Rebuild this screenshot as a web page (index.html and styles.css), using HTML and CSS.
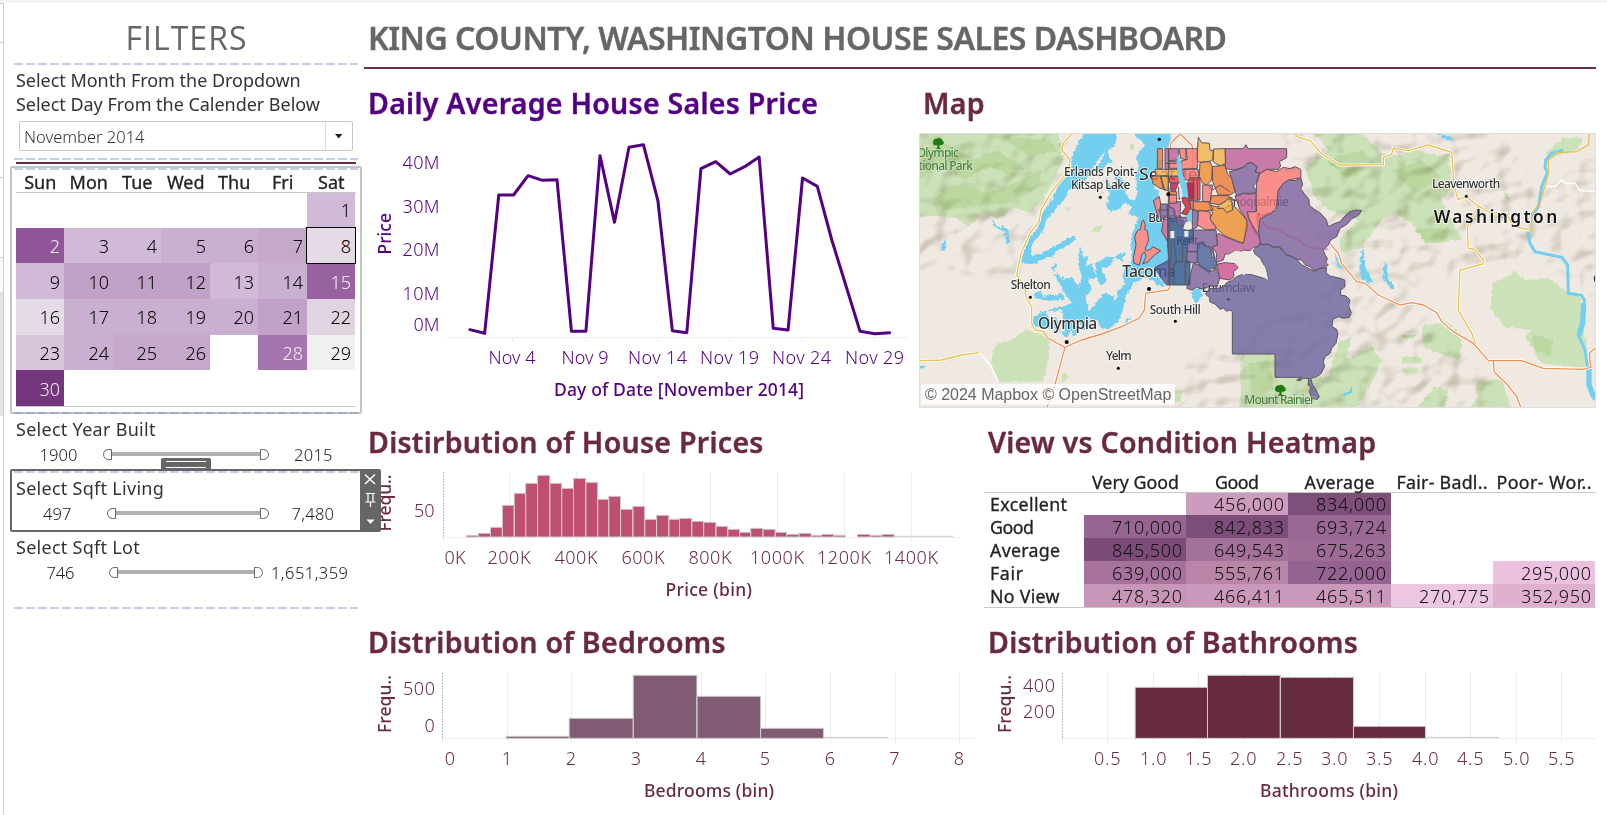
FILE: index.html
```html
<!DOCTYPE html>
<html lang="en">
<head>
<meta charset="utf-8">
<title>King County House Sales</title>
<link rel="stylesheet" href="styles.css">
</head>
<body>
<div class="page">
  <div class="gutter"><i class="g1"></i><i class="g2"></i><i class="g3"></i><i class="g4"></i><i class="g5"></i></div>

  <aside class="sidebar">
    <h2 class="filters">FILTERS</h2>
    <div class="dash"></div>
    <div class="hint"><p class="h-a">Select Month From the Dropdown</p><p class="h-b">Select Day From the Calender Below</p></div>
    <div class="select"><span>November 2014</span><b><svg width="8" height="5" viewBox="0 0 8 5"><path d="M0 0H7.4L3.7 4.4Z" fill="#222"/></svg></b></div>
    <div class="dash"></div>
    <div class="rule"></div>
    <section class="calendar">
      <div class="dash"></div>
      <div class="days"><span>Sun</span><span>Mon</span><span>Tue</span><span>Wed</span><span>Thu</span><span>Fri</span><span>Sat</span></div>
      <div class="cells">
        <i></i><i></i><i></i><i></i><i></i><i></i><span class="c3">1</span>
        <span class="c9 lt">2</span><span class="c3">3</span><span class="c3">4</span><span class="c4">5</span><span class="c4">6</span><span class="c5">7</span><span class="c1 sel">8</span>
        <span class="c3">9</span><span class="c6">10</span><span class="c6">11</span><span class="c6">12</span><span class="c3">13</span><span class="c4">14</span><span class="c8 lt">15</span>
        <span class="c1">16</span><span class="c4">17</span><span class="c4">18</span><span class="c4">19</span><span class="c4">20</span><span class="c6">21</span><span class="c1b">22</span>
        <span class="c2">23</span><span class="c4">24</span><span class="c5">25</span><span class="c5">26</span><i></i><span class="c7 lt">28</span><span class="c0">29</span>
        <span class="c10 lt">30</span><i></i><i></i><i></i><i></i><i></i><i></i>
      </div>
      <div class="dash low"></div>
    </section>
    <section class="range year">
      <h3 class="t-year">Select Year Built</h3>
      <svg width="345" height="24" viewBox="14 443 345 24"><text class="val" x="39.5" y="461" textLength="38">1900</text><text class="val" x="294" y="461" textLength="38.5">2015</text><path class="track" d="M112 454H260"/><path class="knob" d="M111.500 449.500V459.500H108.500A5 5 0 0 1 108.500 449.500ZM260.500 449.500V459.500H263.500A5 5 0 0 0 263.500 449.500Z"/></svg>
    </section>
    <section class="range living">
      <div class="dash"></div>
      <h3 class="t-liv">Select Sqft Living</h3>
      <svg width="345" height="24" viewBox="14 501 345 24"><text class="val" x="43" y="520.600" textLength="28.500">497</text><text class="val" x="291.500" y="520.600" textLength="42.500">7,480</text><path class="track" d="M116 514H260"/><path class="knob" d="M115.500 509.500V519.500H112.500A5 5 0 0 1 112.500 509.500ZM260.500 509.500V519.500H263.500A5 5 0 0 0 263.500 509.500Z"/></svg>
      <div class="grip"></div>
      <div class="tools"><svg width="21" height="63" viewBox="0 0 21 63"><g fill="none" stroke="#fff" stroke-width="1.500"><path d="M5 5.500L15 15M15 5.500L5 15"/><path stroke-width="1.200" d="M6 24.500H15M8 24.500V33M13 24.500V33M5.500 33H15.500M10.500 33V38"/></g><path d="M6.500 50.500H14.500L10.500 55Z" fill="#fff"/></svg></div>
    </section>
    <section class="range lot">
      <h3 class="t-lot">Select Sqft Lot</h3>
      <svg width="345" height="24" viewBox="14 561 345 24"><text class="val" x="46.500" y="579" textLength="28">746</text><text class="val" x="271" y="579" textLength="77">1,651,359</text><path class="track" d="M118 572H254"/><path class="knob" d="M117.500 567.500V577.500H114.500A5 5 0 0 1 114.500 567.500ZM254.500 567.500V577.500H257.500A5 5 0 0 0 257.500 567.500Z"/></svg>
      <div class="dash"></div>
    </section>
  </aside>

  <main class="main">
    <header class="banner"><h1>KING COUNTY, WASHINGTON HOUSE SALES DASHBOARD</h1></header>

    <div class="row row-a">
      <section class="panel p-line">
        <h2 class="title indigo w-daily">Daily Average House Sales Price</h2>
        <svg class="chart line" width="555" height="290" viewBox="364 130 555 290">
          <path class="grid" d="M447 337.500H908M512.500 337V342M585.500 337V342M657.500 337V342M729.500 337V342M801.500 337V342M874.500 337V342"/>
          <g class="num" text-anchor="end"><text x="439.500" y="169" textLength="37">40M</text><text x="439.500" y="213" textLength="37">30M</text><text x="439.500" y="256.300" textLength="37">20M</text><text x="439.500" y="300" textLength="37">10M</text><text x="439.500" y="331" textLength="26">0M</text></g>
          <text class="lab" transform="translate(390.500 254.500) rotate(-90)" textLength="41.500">Price</text>
          <polyline class="series" transform="translate(360 0) scale(.34438 .33333)" points="319,989 362,1000 403,585 446,585 488,527 530,541 572,539 614,994 656,994 697,467 739,667 781,442 823,434 865,602 907,992 949,998 990,506 1033,485 1075,522 1117,500 1159,471 1200,985 1243,990 1285,534 1328,559 1370,720 1452,994 1495,1001 1538,998"/>
          <g class="num"><text x="488.500" y="363.500" textLength="47">Nov 4</text><text x="561.500" y="363.500" textLength="47">Nov 9</text><text x="628" y="363.500" textLength="59">Nov 14</text><text x="700" y="363.500" textLength="59">Nov 19</text><text x="772" y="363.500" textLength="59">Nov 24</text><text x="845" y="363.500" textLength="59">Nov 29</text></g>
          <text class="lab" x="554" y="395.500" textLength="250">Day of Date [November 2014]</text>
        </svg>
      </section>
      <section class="panel p-map">
        <h2 class="title w-map">Map</h2>
        <svg class="map" width="677" height="275" viewBox="12 9 2031 825">
          <defs>
            <filter id="relief" x="0" y="0" width="100%" height="100%" color-interpolation-filters="sRGB">
              <feTurbulence type="fractalNoise" baseFrequency=".013 .016" numOctaves="2" seed="7" result="n"/>
              <feDiffuseLighting in="n" surfaceScale="16" diffuseConstant="1.2" lighting-color="#fff"><feDistantLight azimuth="225" elevation="56"/></feDiffuseLighting>
              <feColorMatrix values=".36 0 0 0 .64  0 .39 0 0 .61  0 0 .5 0 .5  0 0 0 1 0"/>
            </filter>
            <filter id="jag" x="0" y="0" width="100%" height="100%"><feTurbulence type="fractalNoise" baseFrequency=".1" numOctaves="2" seed="3"/><feDisplacementMap in="SourceGraphic" scale="14" xChannelSelector="R" yChannelSelector="G"/></filter>
            <filter id="soft" x="-10%" y="-10%" width="120%" height="120%"><feGaussianBlur stdDeviation="8"/></filter>
            <mask id="hills"><g fill="#fff" filter="url(#soft)"><path d="M0 0H460L440 130 350 300 310 430 180 440 60 400 0 420ZM820 700L1260 480 1100 0H1700L1800 60 1860 200 1880 380 1700 400 1480 480 1560 620 1700 720 1780 834H700Z"/><path d="M1880 200L2040 60V500L1900 400Z"/></g></mask>
          </defs>
          <rect class="land" x="0" y="0" width="2060" height="840"/>
          <!-- forests -->
          <g filter="url(#jag)">
          <g class="wood">
            <path d="M0 0H430L445 90 400 180 350 250 300 235 250 265 205 250 160 290 120 262 60 258 0 262Z"/>
            <path d="M250 640L300 625 330 598 375 612 405 630 400 690 385 755 250 755 228 700 235 660Z"/>
            <path d="M978 672L1085 672 1085 745 1240 740 1270 640 1310 620 1290 690 1370 650 1400 690 1370 760 1320 840H975Z"/>
            <path d="M1170 115L1240 60 1190 0H1330L1400 70 1460 75 1500 60 1560 75 1600 75 1610 170 1580 210 1610 270 1640 330 1530 340 1490 280 1440 250 1400 270 1340 350 1280 370 1270 330 1330 270 1240 240 1200 200Z"/>
            <path d="M1735 460L1800 425 1830 450 1900 445 1960 490 2000 500 2000 590 2015 640 2015 715 1880 700 1830 620 1850 600 1770 590 1725 535Z"/>
            <path d="M1520 585L1600 580 1640 615 1635 690 1570 670 1525 650ZM1890 70L1945 25 2008 25 1985 60 1900 85ZM1680 760L1760 745 1790 840H1660L1690 800ZM1560 770L1600 780 1590 840H1500Z"/>
            <path d="M645 45h12v14h-14zM535 295l30-12-8 18-28 6zM450 230l14 4-6 12zM438 742l12-18 10 20-20 16zM780 785l24-4-6 30-20 10zM555 185l12-2-4 14zM1460 615h40v12h-40zM1460 680h60v20h-60zM1465 715h45v18h-45zM1770 190l10 0 4 20-14-4z"/>
          </g>
          <g class="wood2"><path d="M12 60L90 40 180 90 240 60 330 110 300 140 220 110 150 150 70 110 12 150ZM60 200L140 160 220 190 320 150 380 120 370 170 280 220 170 230 90 240ZM260 20L400 30 430 60 340 80ZM1430 120L1520 90 1580 140 1500 190ZM1500 300L1600 290 1590 330 1530 335ZM1230 90L1340 60 1380 100 1300 150ZM1000 700L1060 690 1080 780 1010 800ZM1850 610L1915 630 1905 680 1860 660Z"/></g>
          </g>
          <g class="shade" mask="url(#hills)"><rect x="0" y="0" width="2060" height="840" filter="url(#relief)"/></g>
          <!-- water -->
          <g class="water" filter="url(#jag)">
            <path d="M512 0L490 40 470 80 468 125 430 160 410 210 380 250 370 290 345 320 330 350 318 398 352 406 400 380 412 385 425 362 450 350 485 324 480 318 440 335 410 355 380 372 345 375 352 340 382 305 398 265 430 225 450 205 462 180 500 165 515 145 530 120 560 75 600 45 610 0Z"/>
            <path d="M600 0L575 60 592 100 580 95 560 125 545 110 565 80 590 30ZM645 0L690 45 665 80 672 110 660 140 668 190 655 215 630 190 635 160 600 130 606 165 590 170 575 140 570 150 582 190 575 235 590 245 570 255 605 240 630 220 650 228 640 250 668 262 660 290 648 330 650 395 630 410 622 440 632 462 605 485 610 505 580 520 560 500 565 540 545 560 555 590 580 598 605 580 620 555 632 500 655 460 690 440 720 460 740 470 755 468 730 440 722 425 745 408 762 400V340L745 310 742 270 728 235 733 190 712 160 720 125 740 100 728 60 762 52 770 0Z"/>
            <path d="M495 350L505 380 520 378 512 410 530 400 545 440 520 450 530 480 512 500 520 540 545 525 565 540 540 575 520 560 500 590 480 560 470 520 450 490 440 470 420 440 425 430 450 450 470 440 490 470 500 440 490 400ZM540 400L580 380 600 385 580 410 560 420 575 450 560 470 545 440ZM600 380L632 365 620 395ZM355 495L375 480 385 500 440 490 450 510 400 512 365 505ZM355 560L400 540 425 535 470 520 500 560 470 600 455 625 430 600 400 570 420 600 380 590 350 590ZM480 580L490 610 470 622ZM540 520L570 490 600 500 580 540 550 560ZM500 600L520 565 525 590ZM395 545L410 590 422 560 440 610 450 600 440 540Z"/>
            <path d="M228 270L250 290 278 292 285 338 275 338 268 305 240 292ZM95 325L90 360 75 368 82 340ZM410 418l12-22 4 8-8 18zM830 480L855 475 862 500 845 520 830 500ZM628 575L645 560 640 580ZM12 708h22l-18 10z"/>
            <path d="M1562 12L1595 15 1620 32 1600 32ZM1343 352L1350 400 1372 455 1360 462 1338 440 1335 395ZM1408 400L1417 402 1418 445 1438 468 1432 478 1405 445ZM1275 795L1300 785 1312 770 1310 790 1290 798ZM1260 370L1272 400 1290 415 1275 418 1262 395ZM1105 118L1140 110 1150 116 1110 124Z"/>
          </g>
          <path class="river" d="M1945 60L1910 70 1892 90 1890 115 1898 125 1880 170 1870 230 1850 260M1838 305L1845 340 1860 365 1940 382 1958 405 1960 490 2000 496 2008 510 2002 580 1990 615 2010 660 2018 710 2022 760 2038 810"/>
          <path class="river thick" d="M2006 520L2003 580 1992 615M2022 715V765L2036 800"/>
          <!-- roads -->
          <path class="road-case" d="M470 12L445 40 440 60 465 90 460 125 410 185 378 240 372 275 345 310 318 370 305 435 330 470 332 500 350 530 350 580 360 600 385 605M12 692L80 690 140 675 192 668"/>
          <path class="road yellow" d="M470 12L445 40 440 60 465 90 460 125 410 185 378 240 372 275 345 310 318 370 305 435 330 470 332 500 350 530 350 580 360 600 385 605 400 625M12 692L80 690 140 675 192 668"/>
          <path class="road-white" d="M192 668L225 705 250 755"/>
          <g transform="translate(1005)">
            <path class="road-case" d="M135 12L145 22 180 32 215 72 270 105 400 104 400 82 425 72 430 55 475 62 535 45 605 67 612 170 625 208 650 200 680 225 720 248 770 250 790 290 840 300M685 230L670 255 652 290 655 355 675 358 700 390 698 402 630 420 625 540 665 610 680 650"/>
            <path class="road yellow" d="M135 12L145 22 180 32 215 72 270 105 400 104 400 82 425 72 430 55 475 62 535 45 605 67 612 170 625 208 650 200 680 225 720 248 770 250 790 290 845 300V250L870 220 895 130V90L920 68 980 65 1015 45 1018 12M685 230L670 255 652 290 655 355 675 358 700 390 698 402 630 420 625 540 665 610 680 650"/>
            <path class="road-white" d="M890 170L915 170 935 150 945 160 975 160 990 182 1035 184"/>
            <path class="road-case" d="M240 340L265 370 275 400 320 455 345 460 385 495 450 525 485 518 520 525 560 548 575 575 610 605 670 640 715 692 815 692 880 715 1000 718 1022 712 1018 670 1035 655M730 692L732 725 770 762 800 800 812 831"/>
            <path class="road orange" d="M240 340L265 370 275 400 320 455 345 460 385 495 450 525 485 518 520 525 560 548 575 575 610 605 670 640 715 692 815 692 880 715 1000 718 1022 712 1018 670 1035 655M730 692L732 725 770 762 800 800 812 831"/>
          </g>
          <path class="road-case" d="M765 60L768 38 796 12 832 48 832 240M762 200L768 350 765 470 760 480 692 490 688 540 672 565 620 590 560 612 500 630 450 652 400 625M450 652L410 800 396 831M762 205H830L832 300 810 300"/>
          <path class="road orange" d="M765 60L768 38 796 12 832 48 832 240M762 200L768 350 765 470 760 480 692 490 688 540 672 565 620 590 560 612 500 630 450 652 400 625M450 652L410 800 396 831M762 205H830L832 300 810 300"/>

          <!-- place names beneath the zip areas -->
          <g class="place">
            <text class="big sea" x="672" y="149" textLength="176" lengthAdjust="spacingAndGlyphs">Seattle</text>
            <text x="700" y="275" textLength="102">Burien</text><text x="783" y="345" textLength="68">Kent</text>
            <text class="big" x="622" y="440" textLength="160">Tacoma</text>
            <text x="860" y="485" textLength="161">Enumclaw</text><text x="935" y="227" textLength="187">Snoqualmie</text>
          </g>
          <circle cx="940" cy="508" r="4.500"/><circle cx="1030" cy="253" r="4.500"/>

          <!-- zip areas -->
          <g class="zip" transform="translate(585)">
            <path fill="#6a639f" d="M448 343L475 343 492 352 508 350 520 366 530 375 545 378 560 388 575 404 590 412 612 424 630 416 650 412 648 428 660 438 690 445 704 450 705 470 692 480 692 495 708 498 720 510 716 528 724 548 718 562 700 565 685 560 668 568 666 590 680 598 684 610 678 640 665 655 660 670 645 680 640 695 644 710 632 732 620 740 602 745 608 765 618 780 628 800 622 808 606 806 598 785 603 772 594 765 596 745 580 745 570 752 560 750 575 742H495V672H367V545L360 540 350 544 340 534 330 538 315 522 300 516 298 502 286 492 300 475 320 476 340 470 350 458 365 452 380 440 400 432 425 434 445 440 475 448 470 420 458 400 452 385 435 372 430 360Z"/>
            <path fill="#7d62a0" d="M448 310L440 260 475 250 500 240 502 210 505 180 520 160 535 150 555 152 573 145 578 165 572 175 585 195 597 208 598 225 615 240 632 250 648 268 655 290 675 280 690 275 705 258 720 245 740 240 755 242 745 256 725 266 712 282 690 295 680 320 662 330 655 345 640 360 645 375 652 385 648 398 655 405 630 415 612 422 600 410 585 404 575 390 560 388 545 380 530 375 520 360 508 350 492 352 475 343 448 343Z"/>
            <path fill="#fb7776" d="M450 130L470 118 500 125 520 112 540 116 555 110 572 118 573 143 535 150 520 160 505 180 502 205 500 230 485 250 470 255 450 268 445 310 440 315 430 300 425 285 415 260 412 245 440 245 438 200 440 160Z"/>
            <path fill="#bf5f9a" d="M345 56L400 56 408 44 414 56 530 56V83L508 95 512 108 505 118 470 118 450 130 435 125 442 110 425 98 412 100 405 110 370 120 345 115Z"/>
            <path fill="#7d62a0" d="M358 125L380 120 400 112 412 100 425 98 442 112 435 125 448 130 438 160 430 168 440 185 420 195 400 190 390 198 380 198 372 170Z"/>
            <path fill="#bf5f9a" d="M375 198L400 190 438 190 438 245H412L415 265 430 290 445 315 452 335 445 350 430 352 420 362 400 360 385 370 375 362 360 372 345 372 340 390 318 398 320 370 307 350 323 345 318 325 325 310 380 335 400 340 410 270 390 240Z"/>
            <path fill="#f2b24a" d="M265 22L275 38 298 40 300 60 310 62 308 90 295 95 270 97 260 90ZM310 57L345 56 347 100 330 108 310 95Z"/>
            <path fill="#ed8f30" d="M270 97L300 95 307 110 305 150 290 165 278 160 268 140ZM297 225L340 235 365 225 380 235 410 270 412 290 400 340 380 332 365 326 345 318 325 300 308 285 300 265 308 250Z"/>
            <path fill="#ed7a35" d="M307 110L345 105 352 130 365 145 375 185 360 195 325 195 308 155ZM305 197H355L372 210 350 210 335 225 300 220ZM250 215L295 215 310 240 265 245 247 235Z"/>
            <path fill="#f2b24a" d="M330 222L345 215 352 206 365 208 368 240 350 248 340 235 322 236Z"/>
            <path fill="#fb7776" d="M265 240L300 246 302 270 318 290 315 298 290 300 262 285ZM278 165L308 165 300 215 278 215Z"/>
            <path fill="#7d62a0" d="M250 300L290 300 318 300 323 345 307 350 315 385 300 350 285 348 270 340 262 365 232 365V340L250 335ZM250 400L270 405 300 425 320 415 322 425 330 440 322 470 300 466 280 478 260 472 245 480 230 475 240 440ZM230 365H262V398H230Z"/>
            <path fill="#485f9a" d="M262 340L280 335 290 350 300 350 305 375 320 395 318 415 305 415 295 428 285 418 270 410 262 395Z"/>
            <path fill="#27548f" d="M173 262L220 270 232 300 250 300V335L232 340 230 390 240 400V465L190 465 178 465V395L173 350Z"/>
            <path fill="#48549a" d="M135 412L178 390V465H170L150 440Z"/>
            <path fill="#cf5193" d="M322 402L345 398 385 402 383 415 370 425 372 440 360 450 328 445 325 425Z"/>
            <path fill="#7d62a0" d="M172 222L195 240 198 268 172 262ZM247 240L265 245 262 290 247 300ZM152 222L172 222V262L152 268ZM198 262H235L232 275 212 290 200 280Z"/>
            <path fill="#bf5f9a" d="M176 56H205V90L176 92ZM165 56H176V120H165ZM178 215L212 215 210 262 195 262 190 235 175 230ZM160 268H173V335L155 305Z"/>
            <path fill="#fb7776" d="M178 95H205V115H178ZM207 56H228V90L212 85ZM228 56H262V115L215 118 215 92 232 88ZM218 118H265V150H222ZM130 212L148 200 152 222 145 265 138 240Z"/>
            <path fill="#fa8f8c" fill-opacity="1" d="M100 270L106 285 104 298 112 302 116 330 110 345 105 355 108 362 122 358 128 350 152 362 130 378 115 395 98 402 108 380 104 366 96 372 88 405 72 400 70 385 78 345 74 320 82 302 92 298 95 275Z"/>
            <path fill="#ed7a35" d="M142 56H158V115H142ZM125 140L150 135 178 145 172 180 150 175 128 160ZM178 185H200V195H178Z"/>
            <path fill="#f2b24a" d="M135 118H205L218 130 205 138H137ZM152 138H175V182L160 178Z"/>
            <path fill="#e23d45" d="M240 143H270V210L232 212V160ZM218 202L235 205 242 235 230 255 215 250 228 232 218 215ZM178 140H215V158H178Z"/>
            <path fill="#c21644" d="M182 160H205L195 185 180 180ZM230 160H252V205L238 208Z"/>
            <path fill="#fb7776" d="M178 195H200V220H178ZM240 212H250V240L243 236Z"/>
            <path fill="none" d="M172 318H190V330H235V320H250M190 330L200 395 178 430M195 395H240M218 340V395M205 170L208 210M250 145V210M262 145V212M165 100H205M152 138L165 182M192 395V465M225 395V465M142 240H172M295 165L308 180 330 165 360 185M175 56V465"/>
          </g>
          <path class="road faded" d="M1035 270L1060 295 1085 297 1125 320 1150 330 1180 352 1240 358"/>
          <g class="lakes"><path class="water" d="M788 70L800 100 802 130 816 165 820 205 832 270 822 290 808 230 800 180 790 145 785 100Z"/><path fill="#e0434b" stroke="#5d5560" stroke-width="3" d="M803 202L820 205 827 235 815 255 800 250 813 232 803 215Z"/><path class="land" d="M810 278L825 272 832 290 820 300 805 296ZM766 303H778V325H766ZM808 303H820V320H808Z"/><path class="land" d="M930 378L945 372 960 362 985 366 1010 365 1030 385 1050 410 1060 450 1040 440 1015 425 985 435 970 422 970 410 955 395Z"/></g>

          <g class="place">
            <text x="447" y="137" textLength="221">Erlands Point-</text><text x="468" y="178" textLength="178">Kitsap Lake</text>
            <text x="287" y="476" textLength="120">Shelton</text><text class="big" x="369" y="598" textLength="178">Olympia</text>
            <text x="704" y="551" textLength="153">South Hill</text><text x="573" y="691" textLength="77">Yelm</text>
            <text x="1551" y="173" textLength="205">Leavenworth</text><text x="2034" y="458">C</text>
            <text class="state" x="1556" y="278" textLength="371">Washington</text>
            <g class="park"><text x="5" y="82" textLength="127">Olympic</text><text x="10" y="119" textLength="164">tional Park</text><text x="988" y="821" textLength="212">Mount Rainier</text></g>
          </g>
          <g class="dots"><circle cx="556" cy="202" r="4.500"/><circle cx="346" cy="502" r="4.500"/><circle cx="455" cy="636" r="6"/><circle cx="781" cy="574" r="4.500"/><circle cx="610" cy="715" r="4.500"/><circle cx="1654" cy="199" r="4.500"/><circle cx="702" cy="477" r="6"/><circle cx="760" cy="193" r="6"/><circle cx="733" cy="28" r="5"/></g>
          <g fill="#1f7a12"><path id="tree" d="M54 38C54 30 60 25 66 26C72 22 80 25 81 31C88 33 88 43 82 44C78 48 75 45 73 44L74 53 79 57H62L67 53 67 45C61 48 54 45 54 38Z"/><use href="#tree" x="1026" y="740"/></g>
          <rect x="18" y="762" width="762" height="62" fill="#fff" opacity=".8"/>
          <text class="credit" x="30" y="809" textLength="739">© 2024 Mapbox © OpenStreetMap</text>
          <rect x="13.500" y="10.500" width="2028" height="822" fill="none" stroke="#dedede" stroke-width="3"/>
        </svg>
      </section>
    </div>

    <div class="row row-b">
      <section class="panel p-price">
        <h2 class="title w-prices">Distirbution of House Prices</h2>
        <svg class="chart" width="611" height="140" viewBox="364 468 611 140">
          <path class="grid" d="M442 537.500H960M443.500 537V542M509.500 472V542M576.500 472V542M643.500 472V542M710.500 472V542M777.500 472V542M844.500 472V542M911.500 472V542"/>
          <path class="dotted" d="M443.500 472V537"/>
          <path class="bars rose" transform="translate(360 410) scale(.38265 .33333)" d="M278 381V376H309V381ZM309 381V370H341V381ZM341 381V352H372V381ZM372 381V286H403V381ZM403 381V250H433V381ZM433 381V220H464V381ZM464 381V196H496V381ZM496 381V220H527V381ZM527 381V235H558V381ZM558 381V205H590V381ZM590 381V217H621V381ZM621 381V268H650V381ZM650 381V259H681V381ZM681 381V298H713V381ZM713 381V289H744V381ZM744 381V328H775V381ZM775 381V316H807V381ZM807 381V328H835V381ZM835 381V325H867V381ZM867 381V334H898V381ZM898 381V337H930V381ZM930 381V349H961V381ZM961 381V358H992V381ZM992 381V367H1021V381ZM1021 381V355H1053V381ZM1053 381V358H1085V381ZM1085 381V367H1115V381ZM1115 381V373H1147V381ZM1147 381V370H1179V381ZM1179 381V376H1206V381ZM1206 381V373H1238V381ZM1238 381V376H1268V381ZM1300 381V373H1333V381ZM1333 381V376H1364V381ZM1364 381V373H1396V381ZM1396 379H1550"/>
          <g class="num"><text x="414" y="516.500" textLength="20.500">50</text><text x="444.500" y="563.700" textLength="21">0K</text><text x="487.500" y="563.700" textLength="43">200K</text><text x="554.500" y="563.700" textLength="43">400K</text><text x="621.500" y="563.700" textLength="43">600K</text><text x="688.500" y="563.700" textLength="43">800K</text><text x="750" y="563.700" textLength="54">1000K</text><text x="817" y="563.700" textLength="54">1200K</text><text x="884" y="563.700" textLength="54">1400K</text></g>
          <text class="lab" transform="translate(390.500 531.500) rotate(-90)" textLength="57">Frequ..</text>
          <text class="lab" x="665.500" y="596" textLength="86.500">Price (bin)</text>
        </svg>
      </section>
      <section class="panel p-heat">
        <h2 class="title w-heat">View vs Condition Heatmap</h2>
        <svg class="chart" width="632" height="140" viewBox="975 468 632 140">
          <g shape-rendering="crispEdges">
            <path fill="#cc9bbd" d="M1186 493h102v22h-102z"/><path fill="#7f4f7b" d="M1288 493h103v22h-103z"/>
            <path fill="#966592" d="M1084 515h102v23h-102z"/><path fill="#7d4d79" d="M1186 515h102v23h-102z"/><path fill="#996894" d="M1288 515h103v23h-103z"/>
            <path fill="#7c4b77" d="M1084 538h102v23h-102z"/><path fill="#a4719a" d="M1186 538h102v23h-102z"/><path fill="#9d6b96" d="M1288 538h103v23h-103z"/>
            <path fill="#a6729b" d="M1084 561h102v23h-102z"/><path fill="#b985a7" d="M1186 561h102v23h-102z"/><path fill="#946391" d="M1288 561h103v23h-103z"/><path fill="#ebc1df" d="M1493 561h102v23h-102z"/>
            <path fill="#c795b7" d="M1084 584h102v23h-102z"/><path fill="#ca98ba" d="M1186 584h205v23h-205z"/><path fill="#ecc6e2" d="M1391 584h102v23h-102z"/><path fill="#dfb0d0" d="M1493 584h102v23h-102z"/>
          </g>
          <path stroke="#c8c8c8" d="M984 492.500H1596M984 607.500H1596"/>
          <g class="lab dark"><text x="1092" y="489" textLength="87">Very Good</text><text x="1215" y="489" textLength="44">Good</text><text x="1304.500" y="489" textLength="70">Average</text><text x="1396.500" y="489" textLength="91">Fair- Badl..</text><text x="1496.500" y="489" textLength="95">Poor- Wor..</text>
          <text x="990" y="511.300" textLength="77">Excellent</text><text x="990" y="534.300" textLength="44">Good</text><text x="990" y="557.300" textLength="70">Average</text><text x="990" y="580.300" textLength="33">Fair</text><text x="990" y="603" textLength="69.500">No View</text></g>
          <g class="num cell" text-anchor="end">
            <text x="1284" y="511.300" textLength="70">456,000</text><text x="1386" y="511.300" textLength="70">834,000</text>
            <text x="1182" y="534.300" textLength="70">710,000</text><text x="1284" y="534.300" textLength="70">842,833</text><text x="1386" y="534.300" textLength="70">693,724</text>
            <text x="1182" y="557.300" textLength="70">845,500</text><text x="1284" y="557.300" textLength="70">649,543</text><text x="1386" y="557.300" textLength="70">675,263</text>
            <text x="1182" y="580.300" textLength="70">639,000</text><text x="1284" y="580.300" textLength="70">555,761</text><text x="1386" y="580.300" textLength="70">722,000</text><text x="1591" y="580.300" textLength="70">295,000</text>
            <text x="1182" y="603" textLength="70">478,320</text><text x="1284" y="603" textLength="70">466,411</text><text x="1386" y="603" textLength="70">465,511</text><text x="1489" y="603" textLength="70">270,775</text><text x="1591" y="603" textLength="70">352,950</text>
          </g>
        </svg>
      </section>
    </div>

    <div class="row row-c">
      <section class="panel p-bed">
        <h2 class="title w-bed">Distribution of Bedrooms</h2>
        <svg class="chart" width="611" height="145" viewBox="364 668 611 145">
          <path class="grid" d="M442 738.500H976M442.500 738V743M507.500 672V743M571.500 672V743M636.500 672V743M701.500 672V743M765.500 672V743M830.500 672V743M895.500 672V743M959.500 672V743"/>
          <path class="dotted" d="M442.500 673V738"/>
          <path class="bars plum" transform="translate(360 610) scale(.39542 .33333)" d="M370 385V379H529V385ZM529 385V325H691V385ZM691 385V196H852V385ZM852 385V259H1013V385ZM1013 385V355H1172V385ZM1172 382H1335"/>
          <g class="num"><text x="403" y="695" textLength="32">500</text><text x="424.500" y="731.500">0</text>
          <g text-anchor="middle"><text x="450" y="765">0</text><text x="507" y="765">1</text><text x="571" y="765">2</text><text x="636" y="765">3</text><text x="701" y="765">4</text><text x="765" y="765">5</text><text x="830" y="765">6</text><text x="894.500" y="765">7</text><text x="959" y="765">8</text></g></g>
          <text class="lab" transform="translate(390.500 733) rotate(-90)" textLength="58">Frequ..</text>
          <text class="lab" x="644" y="796.600" textLength="130">Bedrooms (bin)</text>
        </svg>
      </section>
      <section class="panel p-bath">
        <h2 class="title w-bath">Distribution of Bathrooms</h2>
        <svg class="chart" width="632" height="145" viewBox="975 668 632 145">
          <path class="grid" d="M1062 738.500H1596M1062.500 738V743M1107.500 672V743M1153.500 672V743M1198.500 672V743M1243.500 672V743M1289.500 672V743M1334.500 672V743M1379.500 672V743M1425.500 672V743M1470.500 672V743M1516.500 672V743M1561.500 672V743"/>
          <path class="dotted" d="M1062.500 673V738"/>
          <path class="bars wine" transform="translate(980 610) scale(.39987 .33333)" d="M388 385V232H569V385ZM569 385V196H751V385ZM751 385V202H934V385ZM934 385V349H1114V385ZM1114 382H1298"/>
          <g class="num"><text x="1023" y="692" textLength="32">400</text><text x="1023" y="718" textLength="32">200</text>
          <text x="1094" y="765" textLength="26.500">0.5</text><text x="1140" y="765" textLength="26.500">1.0</text><text x="1185" y="765" textLength="26.500">1.5</text><text x="1230" y="765" textLength="26.500">2.0</text><text x="1276" y="765" textLength="26.500">2.5</text><text x="1321" y="765" textLength="26.500">3.0</text><text x="1366" y="765" textLength="26.500">3.5</text><text x="1412" y="765" textLength="26.500">4.0</text><text x="1457" y="765" textLength="26.500">4.5</text><text x="1503" y="765" textLength="26.500">5.0</text><text x="1548" y="765" textLength="26.500">5.5</text></g>
          <text class="lab" transform="translate(1010.500 733) rotate(-90)" textLength="58">Frequ..</text>
          <text class="lab" x="1260" y="796.600" textLength="138">Bathrooms (bin)</text>
        </svg>
      </section>
    </div>
  </main>
</div>
</body>
</html>
```
FILE: styles.css
```css
* { box-sizing: border-box; }
body { margin: 0; background: #fff; font-family: "Noto Sans", "Open Sans", sans-serif; color: #333; }
h1, h2, h3, p { margin: 0; font-weight: 400; white-space: nowrap; }
svg { display: block; }
.page { display: flex; width: 1607px; height: 815px; overflow: hidden; border-top: 3px solid #f4f4f4; }

.gutter { width: 4px; height: 812px; border-right: 1px solid #ccc; display: flex; flex-direction: column; flex: none; }
.gutter i { display: block; border-top: 1px solid #ccc; background: #fff; }
.g1 { height: 39px; } .g2 { height: 135px; } .g3 { height: 80px; }
.gutter .g4 { height: 35px; background: #fafafa; }
.gutter .g5 { height: 124px; border: 0; background: #e2e2e2; }

.sidebar { width: 360px; flex: none; padding-left: 10px; position: relative; z-index: 2; }
.dash { width: 344px; height: 2px; background: repeating-linear-gradient(90deg, #c4cfe3 0 9px, transparent 9px 12px); }
.filters { height: 60px; width: 345px; text-align: center; font: 400 32px/70px "Open Sans"; color: #666; letter-spacing: 1px; }
.hint { padding: 3px 0 0 2px; height: 56px; font: 500 18px/24px "Noto Sans"; letter-spacing: -.03px; color: #333; }
.select { margin-left: 5px; width: 334px; height: 30px; border: 1px solid #c8c8c8; border-radius: 2px; display: flex; justify-content: space-between; font: 300 16.5px/29px "Noto Sans"; padding-left: 4px; }
.select b { width: 27px; border-left: 1px solid #ddd; display: flex; align-items: center; justify-content: center; }
.select + .dash { margin-top: 7px; }
.rule { margin: 2px 0 0 2px; width: 340px; height: 2px; background: #6d2c44; }

.calendar { margin: 2px 0 0 -4px; width: 352px; height: 248px; border: 2px solid #c4c4c4; border-radius: 2px; }
.calendar .dash { margin-left: 2px; }
.days { display: grid; grid-template-columns: repeat(7, 48.5px); margin-left: 4px; width: 340px; height: 23px; border-bottom: 1px solid #c8c8c8; font: 400 18px/24px "Noto Sans"; -webkit-text-stroke: .3px #222; text-align: center; color: #222; }
.cells { margin-left: 4px; width: 340px; height: 214px; border-bottom: 1px solid #c8c8c8; display: grid; grid-template-columns: 48px 49px 48px 49px 48px 49px 48px; grid-template-rows: 35px 35px 36px 36px 35px 36px; }
.cells span { text-align: right; padding-right: 4px; font: 300 18px/37px "Noto Sans"; color: #000; }
.cells span:nth-child(7) { line-height: 35px; }
.cells span:nth-child(n+15):nth-child(-n+21), .cells span:nth-child(36) { line-height: 39px; height: 36px; }
.cells .lt { color: #f3ecf5; }
.cells .sel { outline: 1px solid #000; outline-offset: 0; z-index: 1; }
.c0 { background: #f0f0f0; } .c1 { background: #e4dbe6; } .c1b { background: #e0d4e1; } .c2 { background: #d7c5da; }
.c3 { background: #d1bad7; } .c4 { background: #cab0d0; } .c5 { background: #c5a9cd; } .c6 { background: #c2a1c8; }
.c7 { background: #a674af; } .c8 { background: #97629f; } .c9 { background: #8f5799; } .c10 { background: #73367d; }
.low { margin-top: 5px; background: repeating-linear-gradient(90deg, #9dabc6 0 9px, #c4c4c4 9px 12px); }

.range h3 { font: 400 18px/24px "Noto Sans"; letter-spacing: .28px; color: #333; padding-left: 2px; height: 24px; }
.year { height: 55px; padding-top: 3px; }
.year h3 { margin-bottom: 2px; }
.living { position: relative; margin: 0 0 0 -4px; width: 352px; height: 63px; border: 2px solid #666; border-radius: 2px; padding-left: 2px; }
.living h3 { margin-top: 3px; }
.living .dash { width: 345px; }
.grip { position: absolute; left: 149px; top: -13px; width: 50px; height: 12px; background: #666; border-radius: 2px 2px 0 0; padding: 3px 5px; }
.grip::before { content: ""; display: block; height: 5px; border: solid #fff; border-width: 1px 0; }
.tools { position: absolute; left: 348px; top: -2px; width: 21px; height: 63px; background: #666; border-radius: 0 2px 2px 0; }
.lot { padding-top: 3px; height: 77px; }
.lot h3 { margin-bottom: 2px; }
.lot svg { margin-bottom: 22px; }
.val { font: 300 16.5px "Noto Sans"; fill: #222; }
.track { stroke: #b1b1b1; stroke-width: 4; }
.knob { fill: #fff; stroke: #666; stroke-width: 1; }

.main { flex: none; width: 1243px; }
.banner { width: 1232px; height: 66px; border-bottom: 2px solid #6d2c44; padding-left: 4px; }
.banner h1 { font: 600 32px/70px "Noto Sans"; letter-spacing: -.49px; color: #666; -webkit-text-stroke: .4px #666; }
.row { display: flex; }
.row-a { height: 341px; } .row-b { height: 200px; } .row-c { height: 205px; }
.title { font: 600 28.5px/38px "Noto Sans"; letter-spacing: .28px; color: #6a2a3e; -webkit-text-stroke: .4px currentColor; height: 40px; padding-left: 4px; }
.indigo { color: #540082; }
.row-a .title { margin-top: 15px; height: 40px; }
.row-b .title, .row-c .title { margin-top: 13px; height: 45px; }
.p-line { width: 555px; flex: none; } .p-map { flex: none; }
.line { margin-top: 6px; }
.map { margin-top: 9px; }
.p-price, .p-bed { width: 611px; flex: none; }
.p-heat .title, .p-bath .title { padding-left: 13px; }

.grid { stroke: #ededed; fill: none; shape-rendering: crispEdges; }
.dotted { stroke: #bdbdbd; stroke-dasharray: 2 1; shape-rendering: crispEdges; }
.bars { stroke: #ccc; stroke-width: 1; vector-effect: non-scaling-stroke; }
.rose { fill: #bf4f71; } .plum { fill: #815a74; } .wine { fill: #662b3c; }
.series { fill: none; stroke: #540082; stroke-width: 3; vector-effect: non-scaling-stroke; stroke-linejoin: round; stroke-linecap: round; }
.num { font: 300 18px "Noto Sans"; fill: #6a2a4a; }
.lab { font: 500 17.5px "Noto Sans"; fill: #6a2a3e; }
.line .num, .line .lab { fill: #540082; }
.num.cell { fill: #111; }
.lab.dark { font-weight: 400; font-size: 17.8px; fill: #222; stroke: #222; stroke-width: .3px; }

.land { fill: #efe9e2; } .wood { fill: #cbe1b7; } .wood2 { fill: #b2d293; opacity: .6; }
.shade { mix-blend-mode: multiply; }
.water { fill: #73cff0; }
.river { fill: none; stroke: #73cff0; stroke-width: 9; } .thick { stroke-width: 16; }
.road { fill: none; stroke-width: 4; } .road-case { fill: none; stroke: #fff; stroke-width: 9; } .road-white { fill: none; stroke: #fff; stroke-width: 4; }
.yellow { stroke: #eac04e; } .orange { stroke: #f38e51; } .faded { stroke: #a25c8d; opacity: .7; }
.zip { stroke: #5d5560; stroke-width: 3; fill-opacity: .8; }
.place { font: 500 36px "Noto Sans"; fill: #333; stroke: #fff; stroke-opacity: .8; stroke-width: 5; paint-order: stroke; }
.place .big { font-size: 47px; }
.place .sea { font-size: 50px; }
.place .state { font-size: 52px; font-weight: 600; fill: #111; }
.park { fill: #47803a; stroke-width: 3; stroke-opacity: .5; }
.credit { font: 48px "Liberation Sans"; fill: #666; }
```
